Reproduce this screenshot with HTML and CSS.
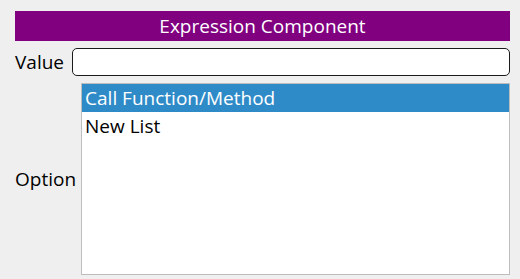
FILE: index.html
```html
<!DOCTYPE html>
<html>
<head>
<meta charset="utf-8">
<link rel="stylesheet" href="styles.css">
</head>
<body>
<div class="panel">
  <div class="header">Expression Component</div>
  <div class="row value-row">
    <label class="label">Value</label>
    <input class="value-input" type="text">
  </div>
  <div class="row option-row">
    <span class="label">Option</span>
    <ul class="list">
      <li class="item selected">Call Function/Method</li>
      <li class="item">New List</li>
    </ul>
  </div>
</div>
</body>
</html>
```
FILE: styles.css
```css
html, body {
  margin: 0;
  padding: 0;
  background: #efefef;
}
body {
  font-family: "Open Sans", "Noto Sans", sans-serif;
  font-size: 19px;
  color: #000;
}
.panel {
  padding: 11px 10px 0 15px;
  display: flex;
  flex-direction: column;
}
.header {
  height: 30px;
  background: #800080;
  color: #fff;
  display: flex;
  align-items: center;
  justify-content: center;
  line-height: 1;
}
.row {
  display: flex;
  align-items: center;
}
.value-row {
  margin-top: 7px;
  gap: 8px;
}
.option-row {
  margin-top: 7px;
  gap: 5px;
}
.label {
  line-height: 1;
}
.value-input {
  flex: 1;
  box-sizing: border-box;
  height: 28px;
  margin: 0;
  border: 1px solid #1a1a1a;
  border-radius: 5px;
  background: #fff;
  font: inherit;
  padding: 0 4px;
  outline: none;
}
.list {
  flex: 1;
  box-sizing: border-box;
  height: 192px;
  margin: 0;
  padding: 0;
  list-style: none;
  background: #fff;
  border: 1px solid #bdbdbd;
}
.item {
  height: 28px;
  line-height: 28px;
  padding-left: 3px;
}
.selected {
  background: #2f8bc8;
  color: #fff;
}
```
